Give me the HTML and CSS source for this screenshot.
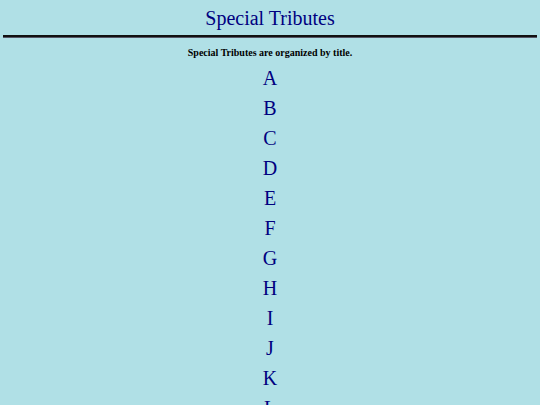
FILE: index.html
```html
<!DOCTYPE html>
<html>
<head>
<meta charset="utf-8">
<title>Special Tributes</title>
<link rel="stylesheet" href="styles.css">
</head>
<body>
<header class="masthead">
  <h1 class="title">Special Tributes</h1>
  <hr class="rule">
</header>
<p class="note">Special Tributes are organized by title.</p>
<ul class="letters">
  <li><a href="#A">A</a></li>
  <li><a href="#B">B</a></li>
  <li><a href="#C">C</a></li>
  <li><a href="#D">D</a></li>
  <li><a href="#E">E</a></li>
  <li><a href="#F">F</a></li>
  <li><a href="#G">G</a></li>
  <li><a href="#H">H</a></li>
  <li><a href="#I">I</a></li>
  <li><a href="#J">J</a></li>
  <li><a href="#K">K</a></li>
  <li><a href="#L">L</a></li>
  <li><a href="#M">M</a></li>
</ul>
</body>
</html>
```
FILE: styles.css
```css
html, body {
  background: #b0e0e6;
}
body {
  margin: 0 3px;
  font-family: "Liberation Serif", "Times New Roman", serif;
  color: #000;
}
.masthead {
  text-align: center;
}
.title {
  margin: 0;
  padding-top: 6px;
  font-size: 20px;
  font-weight: normal;
  line-height: 24px;
  color: #000080;
}
.rule {
  margin: 5px 0 0;
  border: 0;
  height: 2px;
  background: #111;
  border-bottom: 1px solid #556;
}
.note {
  margin: 9px 0 0;
  text-align: center;
  font-size: 10px;
  line-height: 12px;
  font-weight: bold;
}
.letters {
  list-style: none;
  margin: 4px 0 0;
  padding: 0;
  text-align: center;
}
.letters li {
  font-size: 20px;
  line-height: 30px;
}
.letters a {
  color: #000080;
  text-decoration: none;
}
```
